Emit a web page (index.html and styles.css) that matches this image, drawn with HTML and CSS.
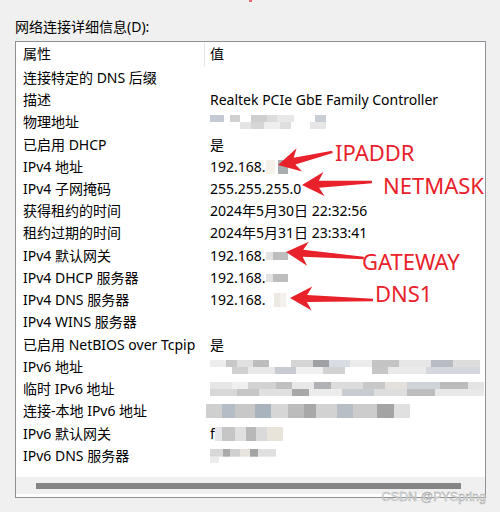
FILE: index.html
```html
<!DOCTYPE html>
<html lang="zh-CN">
<head>
<meta charset="utf-8">
<title>网络连接详细信息</title>
<link rel="stylesheet" href="styles.css">
</head>
<body>
<div class="page">
  <div class="topdot"></div>
  <div class="title">网络连接详细信息(D):</div>
  <div class="box">
    <div class="list">
      <div class="hdr"><div class="k">属性</div><div class="v vh">值</div></div>
      <div class="row"><div class="k">连接特定的 DNS 后缀</div><div class="v"></div></div>
      <div class="row"><div class="k">描述</div><div class="v">Realtek PCIe GbE Family Controller</div></div>
      <div class="row"><div class="k">物理地址</div><div class="v"><span class="mos m-mac"></span></div></div>
      <div class="row"><div class="k">已启用 DHCP</div><div class="v">是</div></div>
      <div class="row"><div class="k">IPv4 地址</div><div class="v">192.168.<span class="mos m-ip1"></span></div></div>
      <div class="row"><div class="k">IPv4 子网掩码</div><div class="v">255.255.255.0</div></div>
      <div class="row"><div class="k">获得租约的时间</div><div class="v">2024年5月30日 22:32:56</div></div>
      <div class="row"><div class="k">租约过期的时间</div><div class="v">2024年5月31日 23:33:41</div></div>
      <div class="row"><div class="k">IPv4 默认网关</div><div class="v">192.168.<span class="mos m-ip2"></span></div></div>
      <div class="row"><div class="k">IPv4 DHCP 服务器</div><div class="v">192.168.<span class="mos m-ip2"></span></div></div>
      <div class="row"><div class="k">IPv4 DNS 服务器</div><div class="v">192.168.<span class="mos m-ip3"></span></div></div>
      <div class="row"><div class="k">IPv4 WINS 服务器</div><div class="v"></div></div>
      <div class="row"><div class="k">已启用 NetBIOS over Tcpip</div><div class="v">是</div></div>
      <div class="row"><div class="k">IPv6 地址</div><div class="v"><span class="mos m-v6a"></span></div></div>
      <div class="row"><div class="k">临时 IPv6 地址</div><div class="v"><span class="mos m-v6b"></span></div></div>
      <div class="row"><div class="k">连接-本地 IPv6 地址</div><div class="v vl"><span class="mos m-v6c"></span></div></div>
      <div class="row"><div class="k">IPv6 默认网关</div><div class="v">f<span class="mos m-v6d"></span></div></div>
      <div class="row"><div class="k">IPv6 DNS 服务器</div><div class="v"><span class="mos m-v6e"></span></div></div>
    </div>
    <div class="hscroll"><div class="thumb"></div></div>
  </div>
  <div class="watermark">CSDN @PYSpring</div>

  <svg class="arrows" width="500" height="512" viewBox="0 0 500 512">
    <g fill="#e8212b">
      <polygon transform="translate(278,165) rotate(-13.5)" points="0,0 22,-12 17,-3.5 56,-1.2 56,1.2 17,3.5 22,12"/>
      <polygon transform="translate(302,185) rotate(-2.5)" points="0,0 22,-12 17,-3.5 70,-1.2 70,1.2 17,3.5 22,12"/>
      <polygon transform="translate(286,252) rotate(4.4)" points="0,0 22,-12 17,-3.5 78,-1.2 78,1.2 17,3.5 22,12"/>
      <polygon transform="translate(290,298) rotate(1.4)" points="0,0 22,-12 17,-3.5 83,-1.2 83,1.2 17,3.5 22,12"/>
    </g>
  </svg>
  <div class="lbl l-ip">IPADDR</div>
  <div class="lbl l-nm">NETMASK</div>
  <div class="lbl l-gw">GATEWAY</div>
  <div class="lbl l-dns">DNS1</div>
</div>
</body>
</html>
```
FILE: styles.css
```css
html, body {
  margin: 0;
  padding: 0;
  background: #f0f0f0;
}
.page {
  position: relative;
  width: 500px;
  height: 512px;
  overflow: hidden;
  font-family: "Noto Sans", "Noto Sans CJK SC", sans-serif;
  font-size: 14px;
  color: #000;
}
.topdot {
  position: absolute;
  left: 249px;
  top: 0;
  width: 3px;
  height: 2px;
  background: #e86a70;
}
.title {
  padding: 17px 0 0 15px;
  height: 20px;
  line-height: 20px;
}
.box {
  margin: 4px 0 0 15px;
  width: 469px;
  height: 455px;
  border: 1px solid #8e9196;
  background: #fff;
  display: flex;
  flex-direction: column;
}
.list {
  flex: 1;
}
.hdr {
  display: flex;
  height: 24px;
  line-height: 24px;
}
.row {
  display: flex;
  height: 22.24px;
  line-height: 22.24px;
  white-space: nowrap;
}
.k {
  width: 181px;
  padding-left: 7px;
  flex: none;
  overflow: visible;
}
.v {
  padding-left: 6px;
  display: flex;
  align-items: center;
}
.vh {
  border-left: 1px solid #e5e5e5;
  padding-left: 5px;
}
.vl {
  padding-left: 2px;
}
.hdr + .row {
  margin-top: 0.8px;
}
.mos {
  display: inline-block;
  height: 14px;
}
.m-mac {
  width: 135px;
  background:
    linear-gradient(90deg, #c4cad4 0 10%, #fff 10% 15%, #d0d0d0 15% 22%, #fff 22% 30%, #cfcfcf 30% 42%, #dcdcdc 42% 50%, #e8e8e8 50% 62%, #fff 62% 78%, #c9ced6 78% 86%, #fff 86% 100%) top / 100% 50% no-repeat,
    linear-gradient(90deg, #fff 0 22%, #e4e4e4 22% 30%, #d6d6d6 30% 40%, #eeeeee 40% 52%, #dedede 52% 60%, #fff 60% 74%, #e6e6e6 74% 86%, #fff 86% 100%) bottom / 100% 50% no-repeat;
}
.m-ip1 {
  width: 22px;
  background: linear-gradient(90deg, #f6f2ea 0 40%, #fff 40% 55%, #a8aeb0 55% 100%);
}
.m-ip2 {
  width: 22px;
  height: 8px;
  background: linear-gradient(90deg, #e2e2e2 0 30%, #bdbdbd 30% 100%);
}
.m-ip3 {
  width: 20px;
  background: linear-gradient(90deg, #fff 0 40%, #ece8e2 40% 70%, #f4f1ec 70% 100%);
}
.m-v6a {
  width: 270px;
  background:
    linear-gradient(90deg, #ededed 0 6%, #c8c8c8 6% 10%, #e0e0e0 10% 16%, #bdbdbd 16% 22%, #fff 22% 30%, #d4d4d4 30% 38%, #9ea0a4 38% 44%, #d8dde4 44% 52%, #ececec 52% 60%, #c4c4c4 60% 70%, #e6e6e6 70% 82%, #b8bcc2 82% 90%, #ddd 90% 100%) top / 100% 50% no-repeat,
    linear-gradient(90deg, #fff 0 8%, #d0d0d0 8% 14%, #e8e8e8 14% 24%, #c8ccd2 24% 32%, #f0f0f0 32% 42%, #d2d2d2 42% 50%, #fff 50% 60%, #c6c6c6 60% 66%, #eaeaea 66% 80%, #d4d8de 80% 100%) bottom / 100% 50% no-repeat;
}
.m-v6b {
  width: 274px;
  background:
    linear-gradient(90deg, #e6e6e6 0 8%, #f0f0f0 8% 14%, #d2d2d2 14% 24%, #c0c0c0 24% 30%, #e8e8e8 30% 38%, #b0b2b6 38% 44%, #dcdcdc 44% 56%, #c8c8c8 56% 64%, #e4e0dc 64% 72%, #cfd4da 72% 84%, #bbbbbb 84% 94%, #e4e4e4 94% 100%) top / 100% 50% no-repeat,
    linear-gradient(90deg, #d8d8d8 0 10%, #c6c6c6 10% 18%, #e0e0e0 18% 30%, #a8a8a8 30% 36%, #ececec 36% 48%, #c8ccd2 48% 60%, #dedede 60% 72%, #bdbdbd 72% 82%, #e8e8e8 82% 100%) bottom / 100% 50% no-repeat;
}
.m-v6c {
  width: 204px;
  background:
    linear-gradient(90deg, #cfcfcf 0 8%, #b4bcc6 8% 14%, #c8c8c8 14% 24%, #a9b3bd 24% 32%, #d6d6d6 32% 40%, #bcbcbc 40% 48%, #a8a8a8 48% 54%, #d2d2d2 54% 64%, #b8bec6 64% 72%, #cccccc 72% 84%, #a4a4a4 84% 92%, #e0e0e0 92% 100%);
}
.m-v6d {
  width: 68px;
  background:
    linear-gradient(90deg, #e4e6ea 0 10%, #c6c6c6 10% 30%, #e0e0e0 30% 46%, #b8b8b8 46% 60%, #dadada 60% 76%, #e9e4da 76% 100%);
}
.m-v6e {
  width: 66px;
  background:
    linear-gradient(90deg, #d8d8d8 0 20%, #aaaaaa 20% 30%, #d0d0d0 30% 46%, #e6e2dc 46% 60%, #a4a4a4 60% 72%, #e0e0e0 72% 100%) top / 100% 55% no-repeat,
    linear-gradient(90deg, #ececec 0 14%, #fff 14% 100%) bottom / 100% 45% no-repeat;
}
.hscroll {
  height: 17px;
  margin-bottom: 3px;
  background: #f0f0f0;
  display: flex;
  align-items: center;
  padding-left: 20px;
}
.thumb {
  width: 425px;
  height: 6px;
  background: #858585;
}
.watermark {
  position: absolute;
  right: 14px;
  top: 488px;
  font-family: "Liberation Sans", sans-serif;
  font-size: 12.5px;
  line-height: 18px;
  color: #f4f4f4;
  -webkit-text-stroke: 0.5px #a8a8a8;
}
.arrows {
  position: absolute;
  left: 0;
  top: 0;
  pointer-events: none;
}
.lbl {
  position: absolute;
  font-family: "Noto Sans", sans-serif;
  font-size: 22px;
  line-height: 26px;
  color: #e8212b;
}
.l-ip { left: 335px; top: 139px; }
.l-nm { left: 383px; top: 172px; }
.l-gw { left: 362px; top: 248px; }
.l-dns { left: 375px; top: 280px; }
```
